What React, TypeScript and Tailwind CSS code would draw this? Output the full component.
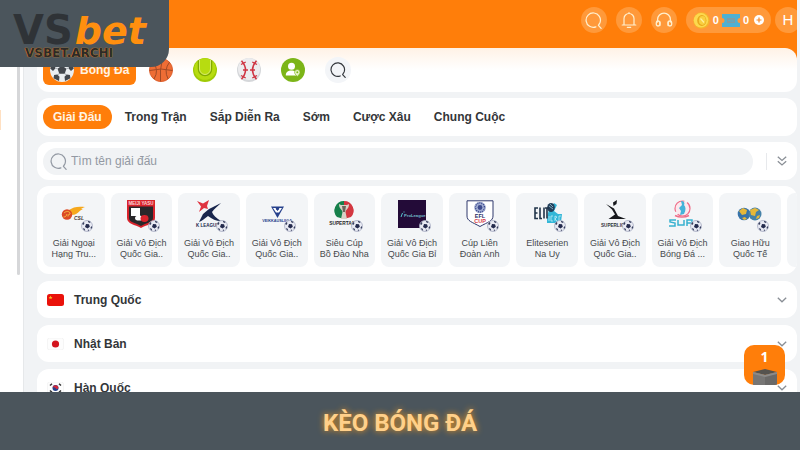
import React from 'react';
import type { ReactNode } from 'react';

const SANS = "font-['Liberation_Sans',Arial,sans-serif]";

function MagnifierIcon({ className }: { className: string }) {
  return (
    <svg viewBox="0 0 18 18" className={className} fill="none" stroke="currentColor" strokeWidth="1.300" strokeLinecap="round" strokeLinejoin="round" aria-hidden="true">
      <path d="M11.500 15.700A7.600 7.600 0 1 1 15.900 11.200l-1.700 2.900 2.900 3.200" />
    </svg>
  );
}

function BellIcon() {
  return (
    <svg viewBox="0 0 18 18" className="size-[18px]" fill="none" stroke="#fff0cf" strokeWidth="1.200" strokeLinecap="round" strokeLinejoin="round" aria-hidden="true">
      <path d="M4 14V7.500a5 5 0 0 1 10 0V14M2.200 14h13.600M9 2.400V1.600M7.300 16.300h3.400" />
    </svg>
  );
}

function HeadsetIcon() {
  return (
    <svg viewBox="0 0 18 18" className="size-[18px]" fill="none" stroke="#fff0cf" strokeWidth="1.300" strokeLinecap="round" aria-hidden="true">
      <path d="M2.600 11V8.500a6.400 6.400 0 0 1 12.800 0V11" />
      <rect x="1.300" y="10" width="3.600" height="5" rx="1.800" />
      <rect x="13.100" y="10" width="3.600" height="5" rx="1.800" />
      <path d="M4.900 14.500V11M13.100 14.500V11" />
    </svg>
  );
}

function CoinIcon() {
  return (
    <svg viewBox="0 0 17 17" className="size-[17px]" aria-hidden="true">
      <circle cx="8.500" cy="8.500" r="8.200" fill="#f5b52a" />
      <circle cx="8" cy="8.300" r="7.200" fill="#fcd94f" />
      <ellipse cx="8.800" cy="8.500" rx="4.600" ry="5.400" fill="#e9a81c" />
      <ellipse cx="9.300" cy="8.500" rx="3.400" ry="4.400" fill="#f9cf40" />
      <path d="M7.500 6.500l3.500 4" stroke="#fff0a0" strokeWidth="1.200" />
    </svg>
  );
}

function TicketIcon() {
  return (
    <svg viewBox="0 0 18 13" className="h-[13px] w-[18px]" aria-hidden="true">
      <path d="M0 0h18v4a2.500 2.500 0 0 0 0 5v4H0V9a2.500 2.500 0 0 0 0-5z" fill="#4fb0d2" />
      <path d="M5 4h8v5H5z" fill="#7f9da5" />
      <path d="M6 6.500h2M9 5.500v2.500M11 5.500v2.500" stroke="#4fb0d2" />
    </svg>
  );
}

function SoccerBall({ className }: { className: string }) {
  return (
    <svg viewBox="0 0 24 24" className={className} aria-hidden="true">
      <circle cx="12" cy="12" r="12" fill="#e9edf0" />
      <g fill="#42474d">
        <path d="M12 7.500l4.400 3.200-1.700 5.100H9.300l-1.700-5.100z" />
        <path d="M8 .7h8l-1 2.600-3 1.500-3-1.500zM.2 10.500l2-4.700 2.600 1.400.6 3.200-2.400 2.600zM23.800 10.500l-2-4.700-2.600 1.400-.6 3.200 2.400 2.600zM3.500 20.300l.6-3.400 3.200-.4 2.200 2.300-.5 4.200zM20.500 20.300l-.6-3.400-3.200-.4-2.200 2.300.5 4.200z" />
      </g>
      <path d="M12 7.500V4.800M16.400 10.700l2.200-.7M14.700 15.800l2 .9M9.300 15.800l-2 .9M7.600 10.700L5.400 10" stroke="#8d949b" strokeWidth=".8" />
    </svg>
  );
}

function BallBadge() {
  return (
    <svg viewBox="0 0 12 12" className="absolute -right-[5px] -bottom-1 size-3" aria-hidden="true">
      <circle cx="6" cy="6" r="5.500" fill="#e8eaf3" stroke="#a9afc4" strokeWidth=".8" />
      <path d="M5 4l3 .3.800 2.500L6.500 8.500 4 7z" fill="#242b4d" />
      <path d="M1 4l1.500-2 1 1-1 2zM7 .8l2.500 1L9 3 7.200 2.200zM10.800 6l.4 1.500-1.200 1.700-.5-1.700zM2 8l1.700.8.5 1.900-1.500-.7zM6.500 10l1.500-.5-.3 1.800z" fill="#39415f" />
    </svg>
  );
}

function BasketballIcon() {
  return (
    <svg viewBox="0 0 24 24" className="size-6" fill="none" stroke="#a04a26" aria-hidden="true">
      <circle cx="12" cy="12" r="11.500" fill="#ee6d35" stroke="#dc5f2c" />
      <path d="M13.500.6Q10.500 12 11.500 23.400M.6 12.500Q12 9.500 23.400 12.500M4 3.800Q10.500 12 5 21M20.500 4.200Q14.500 12 19 20.800" />
    </svg>
  );
}

function TennisIcon() {
  return (
    <svg viewBox="0 0 24 24" className="size-6" fill="none" aria-hidden="true">
      <circle cx="12" cy="12" r="12" fill="#9fca05" />
      <circle cx="12" cy="11" r="10.800" fill="#b7dc10" />
      <path d="M5.500 2.200V11a6.500 6.500 0 0 0 13 0V2.200" stroke="#82ab00" strokeWidth="1.500" />
      <path d="M6.500 2v9a5.500 5.500 0 0 0 11 0V2" stroke="#e3f286" strokeWidth=".8" />
    </svg>
  );
}

function BaseballIcon() {
  return (
    <svg viewBox="0 0 24 24" className="size-6" fill="none" aria-hidden="true">
      <circle cx="12" cy="12" r="12" fill="#d5d7da" />
      <circle cx="12" cy="11" r="11" fill="#ececee" />
      <path d="M4.500 2.800Q12.500 12 4.500 21.200M19.500 2.800Q11.500 12 19.500 21.200" stroke="#cf3442" strokeWidth="1.500" />
      <path d="M4 6.500l4.700-2.500M6 12h5M4 17.500l4.700 2.500M20 6.500L15.300 4M18 12h-5M20 17.500L15.300 20" stroke="#cf3442" strokeWidth="1.300" />
    </svg>
  );
}

function FantasyIcon() {
  return (
    <svg viewBox="0 0 24 24" className="size-6" aria-hidden="true">
      <circle cx="12" cy="12" r="12" fill="#7cb518" />
      <circle cx="10.500" cy="8.300" r="3.500" fill="#fff" />
      <path d="M4.800 17.500c0-3.200 2-5 5.700-5 1.500 0 2.500.3 3.400.8-.5 1.500.2 3 1.500 4.200z" fill="#fff" />
      <path d="M16.300 18.400c-1.700-1.500-2.700-2.700-2.700-4.100a2.700 2.700 0 0 1 5.400 0c0 1.400-1 2.600-2.700 4.100z" fill="#e6f5c8" stroke="#7cb518" strokeWidth=".6" />
      <circle cx="16.300" cy="14.300" r="1" fill="#7cb518" />
    </svg>
  );
}

function ChevronDown() {
  return (
    <svg viewBox="0 0 10 6" className="h-[6px] w-[10px]" fill="none" stroke="#8a8f96" strokeWidth="1.300" aria-hidden="true">
      <path d="M.8.8L5 4.800 9.200.8" />
    </svg>
  );
}

const MARK = { fontFamily: 'Liberation Sans, sans-serif', fontWeight: 700 };

const leagues: { lines: [string, string]; art: ReactNode }[] = [
  {
    lines: ['Giải Ngoại', 'Hạng Tru...'],
    art: (
      <>
        <path d="M9 10c4-3 9-4 16-3-2 .6-3 1.400-4 2 1 0 1.500.3 2 .6-3 .3-4 3-7 4.400-2 1-4 1-6 .5z" fill="#f6a81d" />
        <circle cx="7" cy="14.500" r="5.200" fill="#dc4a26" />
        <path d="M4 13c2-2 5-2 6 0s-3 1-2 3.500M3.500 17c2 0 3-1 3.500-3" stroke="#f8c440" strokeWidth=".9" fill="none" />
        <text x="14" y="20" fontSize="5" fontStyle="italic" fill="#4a3b35" {...MARK}>CSL</text>
      </>
    ),
  },
  {
    lines: ['Giải Vô Địch', 'Quốc Gia..'],
    art: (
      <>
        <path d="M0 0h28v18c0 6-8 6.500-14 10C8 24.500 0 24 0 18z" fill="#d8232c" />
        <path d="M2 6.500h24V18c0 4.500-7 5-12 8-5-3-12-3.500-12-8z" fill="#29272a" />
        <path d="M4 8h9v8H4z" fill="#fff" />
        <ellipse cx="12" cy="18" rx="4" ry="2.600" fill="#fff" />
        <ellipse cx="17.500" cy="18.500" rx="4" ry="3.400" fill="#d8232c" />
        <text x="1.500" y="5" fontSize="4.500" fill="#fbd5d5" {...MARK}>MEIJI YASU</text>
      </>
    ),
  },
  {
    lines: ['Giải Vô Địch', 'Quốc Gia..'],
    art: (
      <>
        <path d="M26 3L14 9 8 14 4 22c3-1 6-4 9-6 4 3 8 5 13 5-5-3-8-6-9-9 2-3 6-6 9-9z" fill="#19264d" />
        <path d="M2 1l6 2.500L14 0l-2 6 1 3-4-1-5 4 2-5.500z" fill="#df3340" />
        <text x="1" y="27" fontSize="4.500" fill="#19264d" {...MARK}>K LEAGUE</text>
      </>
    ),
  },
  {
    lines: ['Giải Vô Địch', 'Quốc Gia..'],
    art: (
      <>
        <path d="M8 6.500h13L14.500 18z" fill="#26418c" />
        <path d="M10 8h2.500l2 3 2-3H19l-3 4.500h-3z" fill="#fff" />
        <circle cx="14.500" cy="9" r="1.300" fill="#26418c" />
        <text x="14" y="21.500" fontSize="3.800" textAnchor="middle" fill="#26418c" {...MARK}>VEIKKAUSLIIGA</text>
      </>
    ),
  },
  {
    lines: ['Siêu Cúp', 'Bồ Đào Nha'],
    art: (
      <>
        <path d="M14 1a9.500 9.500 0 0 0-7 16l7 2z" fill="#16804b" />
        <path d="M14 1a9.500 9.500 0 0 1 7 16l-7 2z" fill="#d33740" />
        <path d="M9 4c0 5 3 5 3.500 8L11 19h6l-1.500-7c.5-3 3.500-3 3.500-8l-2 1h-6z" fill="#d8d2c7" />
        <path d="M12 6h4l-1 6h-2z" fill="#6d655b" />
        <text x="14" y="25" fontSize="4.800" textAnchor="middle" fill="#292929" {...MARK}>SUPERTAÇA</text>
      </>
    ),
  },
  {
    lines: ['Giải Vô Địch', 'Quốc Gia Bỉ'],
    art: (
      <>
        <path d="M0 0h28v28H0z" fill="#230b38" />
        <path d="M3 17l1.500-4M5.500 12h1" stroke="#55c6cd" />
        <text x="6" y="16.500" fontSize="4.200" fill="#72b9c8" {...MARK}>ProLeague</text>
      </>
    ),
  },
  {
    lines: ['Cúp Liên', 'Đoàn Anh'],
    art: (
      <>
        <path d="M1 .8h26V16c0 5-5 6-13 10.500C6 22 1 21 1 16z" fill="#fff" stroke="#2f386d" strokeWidth="1" />
        <circle cx="14" cy="7.500" r="5.800" fill="#a4b0d4" />
        <circle cx="14" cy="7.500" r="4.500" fill="none" stroke="#3d4a8d" strokeWidth="1.500" strokeDasharray="1 1" />
        <circle cx="14" cy="7.500" r="2.400" fill="#3d4a8d" />
        <text x="14" y="18.300" fontSize="5.500" textAnchor="middle" fill="#292f66" {...MARK}>EFL</text>
        <text x="14" y="23" fontSize="5.500" textAnchor="middle" fill="#d5374b" {...MARK}>CUP</text>
      </>
    ),
  },
  {
    lines: ['Eliteserien', 'Na Uy'],
    art: (
      <>
        <path d="M14 18l2-9 5-6 3 2-3 6 4 3v9H14z" fill="#34b7d8" />
        <ellipse cx="18" cy="7.500" rx="3.800" ry="4.500" fill="#233f5b" />
        <path d="M16 6l4 3M17 4l3 3" stroke="#9cc4d3" strokeWidth=".8" />
        <g stroke="#203449" strokeWidth="1.600" fill="none">
          <path d="M5 8H2v10.500h3M2 13h2.500M7 7.500v11h2M11 7.500v11M12 8h4M14 8v10.500" />
        </g>
        <path d="M24 14h5l-1 8h-4z" fill="#34b7d8" />
        <path d="M16 21v-5M20 16h-2v5h2M22 21v-5l2 1-2 2 2 2M28 16h-2v5" stroke="#bdebf6" strokeWidth=".8" fill="none" />
      </>
    ),
  },
  {
    lines: ['Giải Vô Địch', 'Quốc Gia..'],
    art: (
      <>
        <path d="M16 0l-4 2.500.5 3.500 3-2zM5 4l8 4.500 4 7.500 8 3H7.500l6.500-4.500-3-5z" fill="#17191d" />
        <text x="0" y="27" fontSize="4.600" fill="#30343a" {...MARK}>SUPERLIGA</text>
      </>
    ),
  },
  {
    lines: ['Giải Vô Địch', 'Bóng Đá ...'],
    art: (
      <>
        <circle cx="13.500" cy="8.500" r="7.500" fill="#fbe9ee" stroke="#ef6d88" strokeWidth="1.200" strokeDasharray="17 3" />
        <path d="M12 1c3 0 4 2 3 4 2 2 2 5 0 9l-4 1 1-4-2-3 3-3z" fill="#45b3d9" />
        <path d="M6 15.500c4 2 10 2 14 0" stroke="#ef6d88" strokeWidth="1.500" fill="none" />
        <path d="M7 20H1v2l5 1v3H0M9 20v5h6v-5M18 26v-6h5v3h-5" stroke="#38b1cf" strokeWidth="1.500" fill="none" />
      </>
    ),
  },
  {
    lines: ['Giao Hữu', 'Quốc Tế'],
    art: (
      <>
        <circle cx="8" cy="14" r="6.300" fill="#3773a9" />
        <circle cx="19" cy="14" r="6.500" fill="#4682a8" />
        <path d="M3 11l4-3 4 2-1 4-4 1zM6 18l3-1 2 2-3 1zM14 10l5-2 4 2-3 2-1 4-4-1zM21 16l3-1-1 3-3 1z" fill="#e7b839" />
      </>
    ),
  },
];

const countries: { name: string; flag: ReactNode }[] = [
  {
    name: 'Trung Quốc',
    flag: (
      <>
        <rect y="0" width="17" height="12" rx="2.500" fill="#ea120b" />
        <path d="M3.500 1.500l.6 1.400 1.400.1-1.100.9.4 1.400-1.300-.8-1.200.8.4-1.400-1.100-.9 1.400-.1z" fill="#f7bd26" />
      </>
    ),
  },
  {
    name: 'Nhật Bản',
    flag: (
      <>
        <rect x=".5" y="0" width="16" height="12" rx="2" fill="#fdfdfd" stroke="#efefef" strokeWidth=".6" />
        <circle cx="8.500" cy="6" r="3.600" fill="#d3141d" />
      </>
    ),
  },
  {
    name: 'Hàn Quốc',
    flag: (
      <>
        <rect x=".5" y="0" width="16" height="12" rx="2" fill="#fdfdfd" stroke="#efefef" strokeWidth=".6" />
        <circle cx="8.500" cy="6" r="3" fill="#26418c" />
        <path d="M5.600 5.500a3 3 0 0 1 5.900.5c-1 1.500-2.500 1-3 0s-2-1-2.900-.5z" fill="#d3283a" />
        <path d="M3 3.500l2-1.800M12 1.700l2 1.800M3 8.500l2 1.800M12 10.300l2-1.800" stroke="#333" strokeWidth="1.500" />
      </>
    ),
  },
];

const tabs = ['Giải Đấu', 'Trong Trận', 'Sắp Diễn Ra', 'Sớm', 'Cược Xâu', 'Chung Cuộc'];

const otherSports = [
  { name: 'Bóng rổ', icon: <BasketballIcon /> },
  { name: 'Quần vợt', icon: <TennisIcon /> },
  { name: 'Bóng chày', icon: <BaseballIcon /> },
  { name: 'Fantasy', icon: <FantasyIcon /> },
];

function Header() {
  const round = 'flex size-[26px] items-center justify-center rounded-full bg-[#ff993a] text-[#fff0cf]';
  return (
    <header className="flex h-12 shrink-0 items-center justify-end overflow-hidden bg-[#ff7e0a] pb-2">
      <div className="flex items-center gap-[9px]">
        <button className={round} aria-label="Tìm kiếm"><MagnifierIcon className="size-[17px]" /></button>
        <button className={round} aria-label="Thông báo"><BellIcon /></button>
        <button className={round} aria-label="Hỗ trợ"><HeadsetIcon /></button>
        <div className="flex h-[26px] items-center gap-[3px] rounded-full bg-[#ff993a] px-[7px] text-[11px] font-bold text-white">
          <CoinIcon />
          <span>0</span>
          <TicketIcon />
          <span>0</span>
          <button aria-label="Nạp tiền" className="ml-[2px]">
            <svg viewBox="0 0 10 10" className="size-[10px]" aria-hidden="true">
              <circle cx="5" cy="5" r="5" fill="#fff" />
              <path d="M5 2.500v5M2.500 5h5" stroke="#f58a2c" strokeWidth="1.200" />
            </svg>
          </button>
        </div>
      </div>
      <button className="-mr-1 ml-1 size-[26px] rounded-full bg-[#ff993a] text-[15px] leading-[26px] text-white">H</button>
    </header>
  );
}

export default function App() {
  return (
    <div className={`relative flex h-screen flex-col overflow-hidden bg-white text-[#333639] ${SANS}`}>
      <div className="flex min-h-0 flex-1 bg-[#f1f3f5]">
        <div className="flex min-w-0 flex-1 flex-col">
          <Header />
          <div className="flex min-h-0 flex-1">
            <aside className="flex w-6 shrink-0 justify-between border-r border-[#e6e8ea] bg-white">
              <div className="mt-[62px] h-5 w-px bg-[#ffe0c2]" />
              <div className="mr-[3px] h-[227px] w-[3px] rounded-full bg-[#d6d7d9]" />
            </aside>

            <main className="min-w-0 flex-1 overflow-hidden">
              <div className="bg-[linear-gradient(to_bottom,#ff7e0a_14px,#f1f3f5_14px)] pl-[13px]">
                <nav className="flex h-11 items-center gap-5 rounded-xl bg-gradient-to-b from-[#fff2e6] to-white to-50% pl-[6px]" aria-label="Môn thể thao">
                  <button className="mr-[-7px] flex h-[30px] items-center gap-[6px] rounded-md bg-[#ff7e0a] px-[7px] text-xs font-bold text-[#fff3e3]">
                    <SoccerBall className="size-6" />
                    <span>Bóng Đá</span>
                  </button>
                  {otherSports.map((sport) => (
                    <button key={sport.name} aria-label={sport.name}>{sport.icon}</button>
                  ))}
                  <button aria-label="Tìm môn thể thao" className="flex size-[26px] items-center justify-center rounded-full bg-[#f3f5f8] text-[#33373c]">
                    <MagnifierIcon className="size-4" />
                  </button>
                </nav>
              </div>

              <div className="flex flex-col gap-[7px] pl-[13px]">
                <div className="flex flex-col gap-[6px] pt-[6px]">
                  <nav className="flex h-[38px] items-center gap-[3px] rounded-xl bg-white pl-[6px]" aria-label="Loại kèo">
                    {tabs.map((tab, i) => (
                      <button
                        key={tab}
                        className={
                          i === 0
                            ? 'h-6 rounded-full bg-[#ff7e0a] px-[10px] text-xs font-bold text-[#fff3e3]'
                            : 'h-6 px-[10px] text-xs font-bold'
                        }
                      >
                        {tab}
                      </button>
                    ))}
                  </nav>

                  <div className="flex h-[38px] items-center rounded-xl bg-white pr-[10px] pl-[6px]">
                    <label className="flex h-[27px] flex-1 items-center gap-1 rounded-full bg-[#f1f3f5] pl-[7px] text-[#9399a3]">
                      <MagnifierIcon className="size-[17px]" />
                      <input
                        type="text"
                        aria-label="Tìm tên giải đấu"
                        placeholder="Tìm tên giải đấu"
                        className="min-w-0 flex-1 bg-transparent text-xs outline-none placeholder:text-[#9399a3]"
                      />
                    </label>
                    <div className="mr-[10px] ml-[13px] h-[17px] w-px bg-[#e7e9ec]" />
                    <button aria-label="Mở rộng tất cả">
                      <svg viewBox="0 0 10 10" className="size-[10px]" fill="none" stroke="#8a8f96" strokeWidth="1.300" aria-hidden="true">
                        <path d="M.8.8L5 4.500 9.200.8M.8 5.200L5 8.900l4.200-3.700" />
                      </svg>
                    </button>
                  </div>

                  <ul className="grid grid-cols-[repeat(11,minmax(0,1fr))_10px] gap-[6px] overflow-hidden rounded-xl bg-white py-[7px] pl-[6px]">
                    {leagues.map((league, i) => (
                      <li key={i}>
                        <button className="flex w-full flex-col items-center gap-[10px] rounded-lg bg-[#f3f5f7] py-[7px]">
                          <span className="relative">
                            <svg viewBox="0 0 28 28" className="size-7 overflow-visible" aria-hidden="true">{league.art}</svg>
                            <BallBadge />
                          </span>
                          <span className="text-[9px] leading-[11px] whitespace-nowrap text-[#474a4e]">
                            {league.lines[0]}
                            <br />
                            {league.lines[1]}
                          </span>
                        </button>
                      </li>
                    ))}
                    <li className="rounded-l-lg bg-[#f3f5f7]" />
                  </ul>
                </div>

                {countries.map((country) => (
                  <button key={country.name} className="flex h-[37px] shrink-0 items-center rounded-xl bg-white px-[10px] text-left">
                    <svg viewBox="0 0 17 12" className="mr-[10px] h-3 w-[17px]" aria-hidden="true">{country.flag}</svg>
                    <span className="flex-1 text-xs font-bold">{country.name}</span>
                    <ChevronDown />
                  </button>
                ))}
              </div>
            </main>
          </div>
        </div>
        <div className="w-[3px] shrink-0 bg-[#f1f3f5]" />
      </div>

      <footer className="relative z-10 shrink-0 bg-[#4b555c] pt-[18px] pb-[14px] text-center">
        <h1 className="font-['Roboto',sans-serif] text-[24px] leading-[26px] font-bold text-[#ffd08a] [text-shadow:0_0_6px_#f39a1c]">
          KÈO BÓNG ĐÁ
        </h1>
      </footer>

      <a href="#top" className="absolute top-0 left-0 h-[67px] w-[169px] rounded-br-[18px] bg-[#4b555c] pt-[14px] pl-[13px] font-['DejaVu_Sans',sans-serif] font-bold">
        <span className="flex items-baseline gap-[2px] text-[40px] leading-8 whitespace-nowrap">
          <span className="text-[#2f3337]">VS</span>
          <span className="text-[38px] text-[#ff8f0f] italic">bet</span>
        </span>
        <span className="block pl-3 text-[12px] leading-3 text-[#2c2a29] [text-shadow:0_0_1px_#f08a1c,0_0_1px_#f08a1c]">VSBET.ARCHI</span>
      </a>

      <button className="absolute right-[15px] bottom-[65px] flex h-10 w-[41px] flex-col items-center justify-between overflow-hidden rounded-[10px] bg-[#ff7e0a] pt-1">
        <span className="font-['Open_Sans',sans-serif] text-sm leading-4 font-bold text-white">1</span>
        <svg viewBox="0 0 24 16" className="h-4 w-6" aria-hidden="true">
          <path d="M0 3l12-3 12 3-12 3z" fill="#55534f" />
          <path d="M0 3l12 3v10H0z" fill="#777675" />
          <path d="M24 3L12 6v10h12z" fill="#6a6968" />
          <path d="M0 3l12 3 12-3v2L12 8 0 5z" fill="#8b8a89" />
        </svg>
      </button>
    </div>
  );
}
